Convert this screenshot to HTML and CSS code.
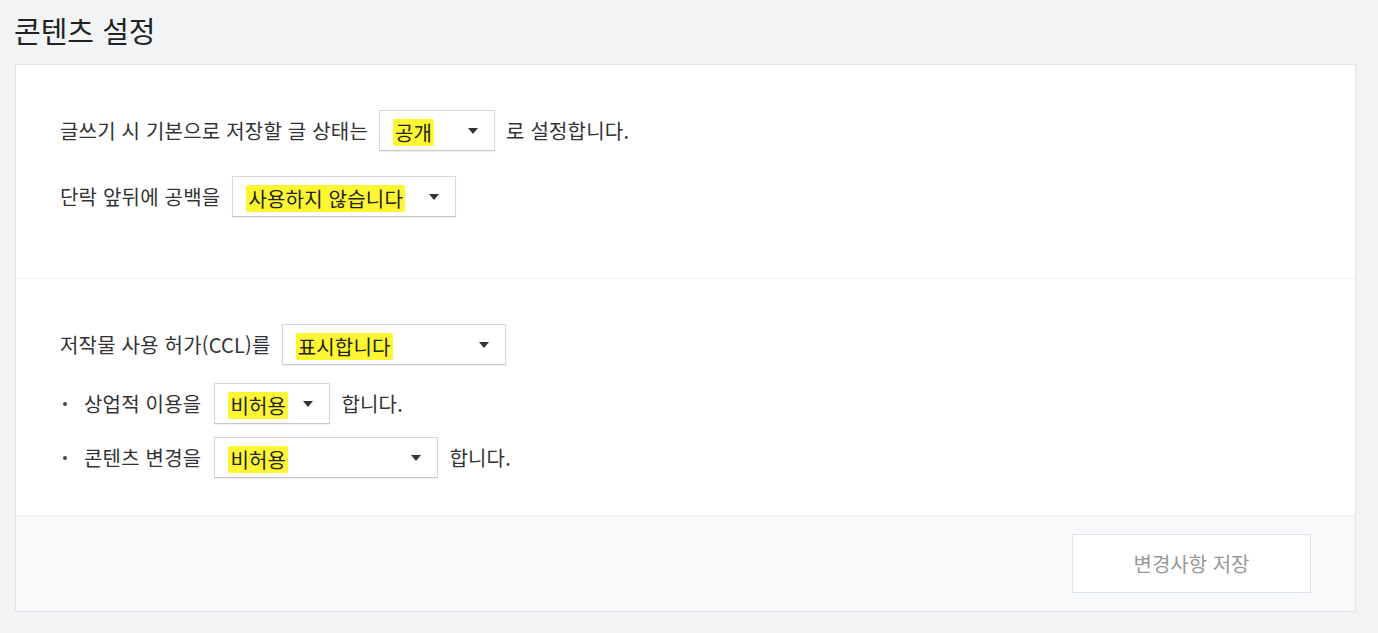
FILE: index.html
```html
<!DOCTYPE html>
<html lang="ko">
<head>
<meta charset="utf-8">
<link rel="stylesheet" href="styles.css">
</head>
<body>
<h1 class="title">콘텐츠 설정</h1>
<div class="card">
  <section class="sec sec1">
    <div class="row">
      <span class="lbl">글쓰기 시 기본으로 저장할 글 상태는</span>
      <div class="sel w116"><span class="mk">공개</span><span class="arr"></span></div>
      <span class="lbl">로 설정합니다.</span>
    </div>
    <div class="row r2">
      <span class="lbl">단락 앞뒤에 공백을</span>
      <div class="sel w224 ml12"><span class="mk">사용하지 않습니다</span><span class="arr"></span></div>
    </div>
  </section>
  <section class="sec sec2">
    <div class="row">
      <span class="lbl">저작물 사용 허가(CCL)를</span>
      <div class="sel w224"><span class="mk">표시합니다</span><span class="arr"></span></div>
    </div>
    <div class="row sub s1">
      <span class="dot"></span>
      <span class="lbl">상업적 이용을</span>
      <div class="sel w116"><span class="mk">비허용</span><span class="arr"></span></div>
      <span class="lbl">합니다.</span>
    </div>
    <div class="row sub s2">
      <span class="dot"></span>
      <span class="lbl">콘텐츠 변경을</span>
      <div class="sel w224"><span class="mk">비허용</span><span class="arr"></span></div>
      <span class="lbl">합니다.</span>
    </div>
  </section>
  <footer class="foot">
    <button class="save">변경사항 저장</button>
  </footer>
</div>
</body>
</html>
```
FILE: styles.css
```css
* { box-sizing: border-box; }
html, body { margin: 0; padding: 0; }
body {
  background: #f3f4f6;
  font-family: "Noto Sans CJK KR", "Noto Sans", sans-serif;
  color: #333;
  padding: 0 22px 0 15px;
}
.title {
  margin: 0 0 0 -1px;
  padding: 10px 0 0 0;
  height: 64px;
  font-size: 29px;
  font-weight: 400;
  color: #222;
  line-height: 40px;
  letter-spacing: 0;
}
.card {
  background: #fff;
  border: 1px solid #e1e4e9;
}
.sec { padding: 45px 44px 0 44px; }
.sec1 { height: 214px; border-bottom: 1px solid #eeeff2; }
.sec2 { height: 236px; }
.row {
  display: flex;
  align-items: center;
  height: 41px;
  font-size: 20px;
}
.r2 { margin-top: 25px; }
.s1 { margin-top: 18px; }
.s2 { margin-top: 13px; }
.lbl { white-space: nowrap; letter-spacing: 0.2px; }
.sel {
  position: relative;
  height: 41px;
  margin: 0 11px 0 11px;
  border: 1px solid #d3d7de;
  border-bottom-color: #c4c9d1;
  box-shadow: 0 1px 1px rgba(0,0,0,0.06);
  background: #fff;
  display: flex;
  align-items: center;
  padding-left: 15px;
  color: #222;
  letter-spacing: 0.2px;
  white-space: nowrap;
}
.ml12 { margin-left: 12px; }
.sub .sel { margin-left: 13px; }
.w116 { width: 116px; }
.w224 { width: 224px; }
.mk {
  background: #fdf632;
  padding: 0 2px;
  margin-left: -2px;
  border-radius: 2px;
  line-height: 27px;
  margin-top: 3px;
}
.arr {
  position: absolute;
  right: 16px;
  top: 17px;
  width: 0;
  height: 0;
  border-left: 5px solid transparent;
  border-right: 5px solid transparent;
  border-top: 6px solid #333;
}
.sub { padding-left: 3px; }
.dot {
  width: 4px; height: 4px;
  border-radius: 50%;
  background: #444;
  margin-right: 17px;
}
.foot {
  background: #f8f9fb;
  border-top: 1px solid #eeeff2;
  height: 96px;
  display: flex;
  justify-content: flex-end;
  align-items: center;
  padding-right: 44px;
}
.save {
  width: 239px;
  height: 59px;
  background: #fff;
  border: 1px solid #dde1e8;
  font-family: inherit;
  font-size: 20px;
  color: #999;
  cursor: default;
}
```
